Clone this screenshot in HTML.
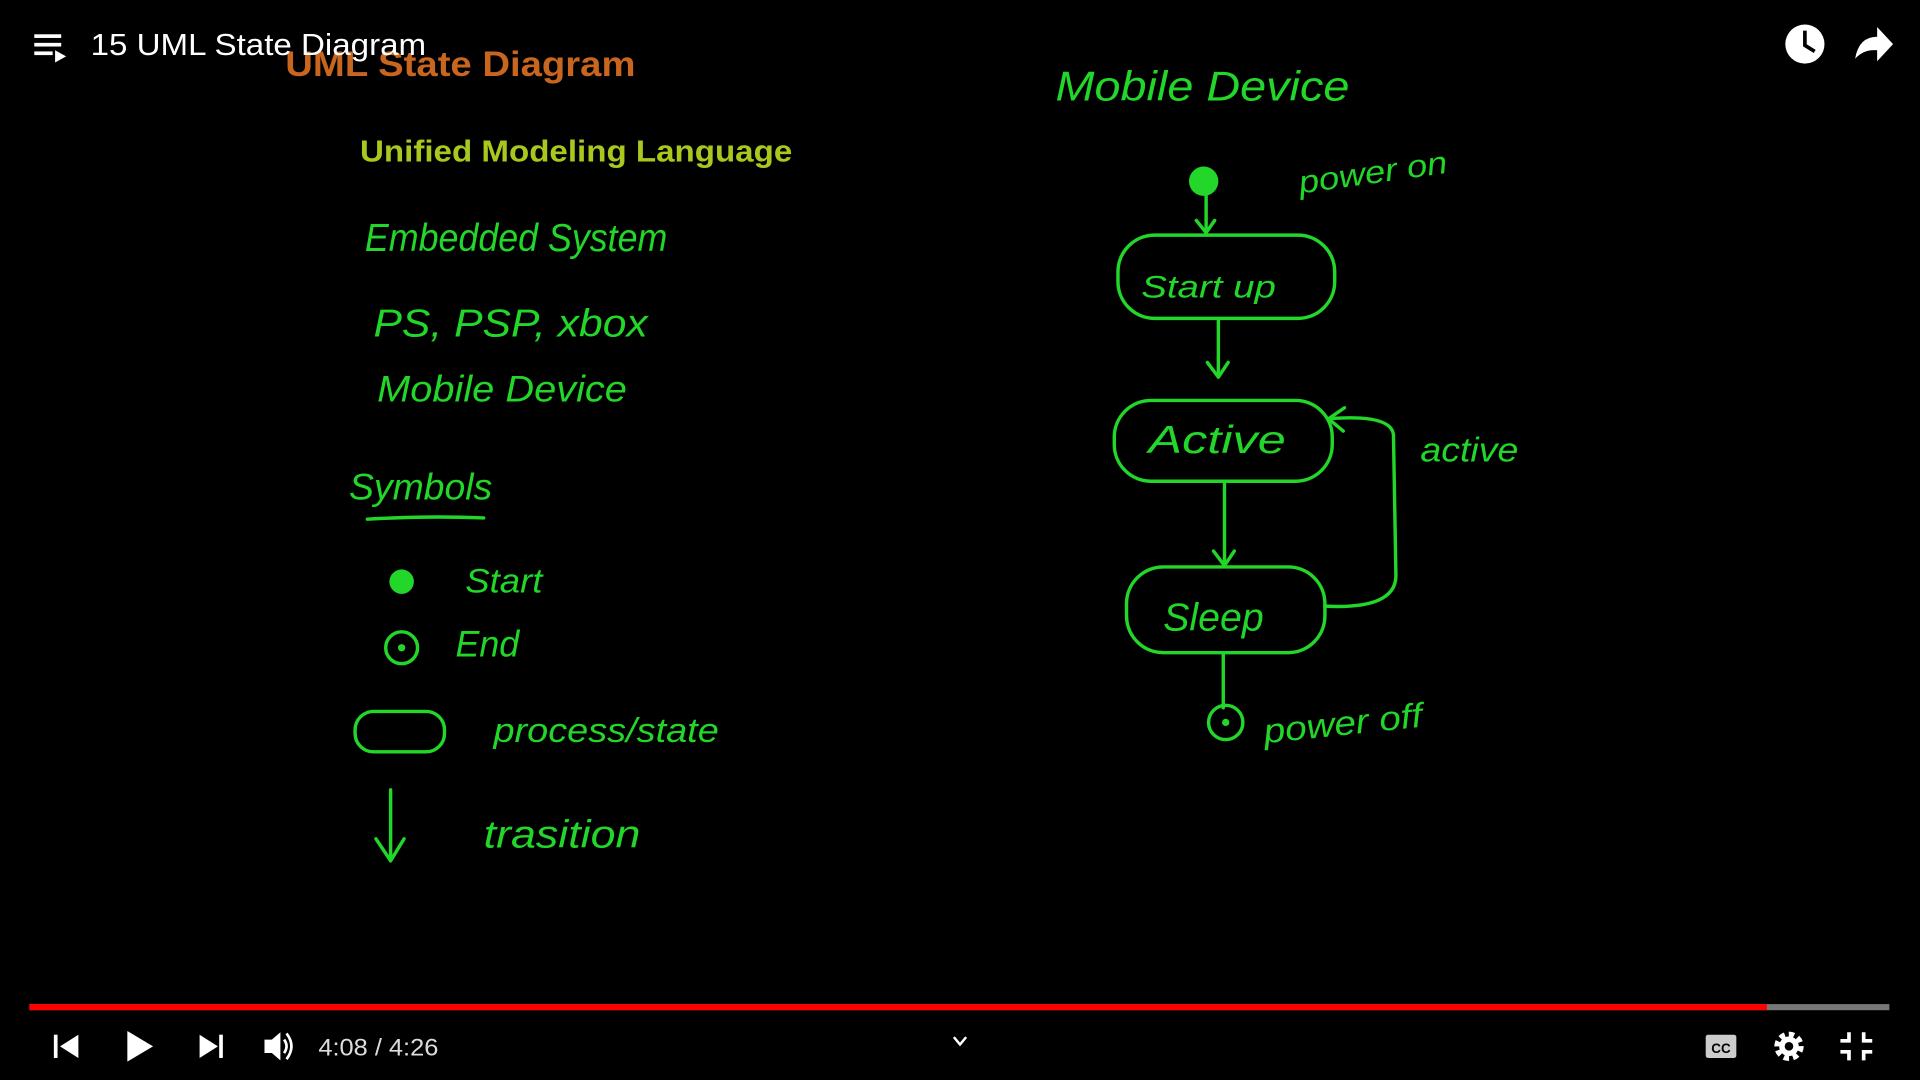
<!DOCTYPE html>
<html><head><meta charset="utf-8"><style>
html,body{margin:0;padding:0;background:#000;width:1920px;height:1080px;overflow:hidden}
svg{display:block}
.h{fill:#22d62a;font-family:"Liberation Sans",sans-serif;font-style:italic}
.s{fill:none;stroke:#22d62a;stroke-width:2.8;stroke-linecap:round;stroke-linejoin:round}
.w{fill:#fff}
</style></head><body>
<svg width="1920" height="1080" viewBox="0 0 1568 882" xmlns="http://www.w3.org/2000/svg">
<rect width="1568" height="882" fill="#000"/>
<text x="233" y="62" font-family="Liberation Sans,sans-serif" font-weight="bold" font-size="29" fill="#c8651e" textLength="286" lengthAdjust="spacingAndGlyphs">UML State Diagram</text>
<text x="294" y="132" font-family="Liberation Sans,sans-serif" font-weight="bold" font-size="25" fill="#a8c81e" textLength="353" lengthAdjust="spacingAndGlyphs">Unified Modeling Language</text>
<text class="h" x="298" y="205" font-size="32" textLength="247" lengthAdjust="spacingAndGlyphs">Embedded System</text>
<text class="h" x="305" y="275" font-size="32" textLength="224" lengthAdjust="spacingAndGlyphs">PS, PSP, xbox</text>
<text class="h" x="308" y="328" font-size="30" textLength="204" lengthAdjust="spacingAndGlyphs">Mobile Device</text>
<text class="h" x="285" y="408" font-size="30" textLength="117" lengthAdjust="spacingAndGlyphs">Symbols</text>
<path class="s" d="M300 424 Q350 421 395 423"/>
<circle cx="328" cy="475" r="10" fill="#22d62a"/>
<text class="h" x="380" y="484" font-size="28" textLength="63" lengthAdjust="spacingAndGlyphs">Start</text>
<circle class="s" cx="328" cy="529" r="13"/><circle cx="328" cy="529" r="3" fill="#22d62a"/>
<text class="h" x="372" y="536" font-size="30" textLength="52" lengthAdjust="spacingAndGlyphs">End</text>
<rect class="s" x="290" y="581" width="73" height="33" rx="15"/>
<text class="h" x="403" y="606" font-size="28" textLength="184" lengthAdjust="spacingAndGlyphs">process/state</text>
<path class="s" d="M319 645 L319 703 M307 685 L319 703 L330 685"/>
<text class="h" x="395" y="692" font-size="32" textLength="128" lengthAdjust="spacingAndGlyphs">trasition</text>
<text class="h" x="862" y="82" font-size="34" textLength="240" lengthAdjust="spacingAndGlyphs">Mobile Device</text>
<circle cx="983" cy="148" r="12" fill="#22d62a"/>
<text class="h" x="1062" y="158" font-size="26" transform="rotate(-8 1062 158)" textLength="122" lengthAdjust="spacingAndGlyphs">power on</text>
<path class="s" d="M985 160 L985 190 M977 180 L985 190 L992 180"/>
<rect class="s" x="913" y="192" width="177" height="68" rx="30"/>
<text class="h" x="932" y="243" font-size="26" textLength="110" lengthAdjust="spacingAndGlyphs">Start up</text>
<path class="s" d="M995 262 L995 308 M986 296 L995 308 L1003 296"/>
<rect class="s" x="910" y="327" width="178" height="66" rx="30"/>
<text class="h" x="938" y="370" font-size="32" textLength="112" lengthAdjust="spacingAndGlyphs">Active</text>
<path class="s" d="M1000 393 L1000 462 M991 450 L1000 462 L1008 450"/>
<rect class="s" x="920" y="463" width="162" height="70" rx="30"/>
<text class="h" x="950" y="515" font-size="32" textLength="82" lengthAdjust="spacingAndGlyphs">Sleep</text>
<path class="s" d="M1082 495 Q1140 498 1140 470 L1138 355 Q1136 338 1085 342 M1098 333 L1085 342 L1097 352"/>
<text class="h" x="1160" y="377" font-size="28" textLength="80" lengthAdjust="spacingAndGlyphs">active</text>
<path class="s" d="M999 533 L999 578"/>
<circle class="s" cx="1001" cy="590" r="14"/><circle cx="1001" cy="590" r="3" fill="#22d62a"/>
<text class="h" x="1033" y="607" font-size="28" transform="rotate(-6 1033 607)" textLength="130" lengthAdjust="spacingAndGlyphs">power off</text>
<g class="w"><rect x="28" y="28" width="22" height="3"/><rect x="28" y="35" width="22" height="3"/><rect x="28" y="42" width="15" height="3"/><path d="M45 41 L54 46 L45 51Z"/></g>
<text x="74" y="45" font-family="Liberation Sans,sans-serif" font-size="25" fill="#fff" textLength="274" lengthAdjust="spacingAndGlyphs">15 UML State Diagram</text>
<circle cx="1474" cy="36" r="16" fill="#fff"/>
<path d="M1474 25 L1474 37 L1482 42" stroke="#000" stroke-width="3" fill="none"/>
<path d="M1515 48 Q1518 30 1533 30 L1533 22 L1546 36 L1533 50 L1533 41 Q1522 40 1515 48Z" fill="#fff"/>
<rect x="24" y="820" width="1519" height="5" fill="#777"/>
<rect x="24" y="820" width="1419" height="5" fill="#f00"/>
<g class="w">
<rect x="44" y="845" width="3" height="19"/><path d="M64 845 L64 864 L49 854.5Z"/>
<path d="M104 842 L125 854.5 L104 867Z"/>
<path d="M163 845 L163 864 L178 854.5Z"/><rect x="179" y="845" width="3" height="19"/>
<path d="M216 849 L222 849 L229 843 L229 866 L222 860 L216 860Z"/>
</g>
<path d="M232 849 Q236 854.5 232 860 M234 844 Q242 854.5 234 865" stroke="#fff" stroke-width="2.2" fill="none"/>
<text x="260" y="862" font-family="Liberation Sans,sans-serif" font-size="20" fill="#ddd" textLength="98" lengthAdjust="spacingAndGlyphs">4:08 / 4:26</text>
<path d="M779 847 L784 853 L789 847" stroke="#fff" stroke-width="2" fill="none"/>
<rect x="1393" y="845" width="25" height="19" rx="2" fill="#ccc"/>
<text x="1405.5" y="860" text-anchor="middle" font-family="Liberation Sans,sans-serif" font-weight="bold" font-size="11" fill="#000">CC</text>
<circle cx="1461" cy="854.5" r="9" fill="none" stroke="#fff" stroke-width="6" stroke-dasharray="4 3"/>
<circle cx="1461" cy="854.5" r="8" fill="#fff"/><circle cx="1461" cy="854.5" r="3.5" fill="#000"/>
<path d="M1510 843 L1510 850 L1503 850 M1522 843 L1522 850 L1529 850 M1503 859 L1510 859 L1510 866 M1529 859 L1522 859 L1522 866" stroke="#fff" stroke-width="3" fill="none"/>
</svg>
</body></html>
